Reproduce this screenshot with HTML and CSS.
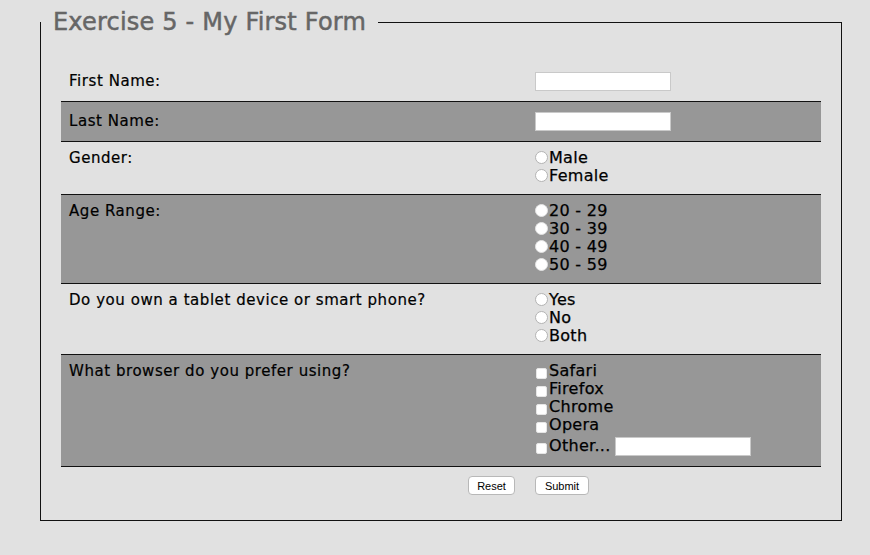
FILE: index.html
```html
<!DOCTYPE html>
<html lang="en">
<head>
<meta charset="utf-8">
<title>Exercise 5 - My First Form</title>
<link rel="stylesheet" href="styles.css">
</head>
<body>
<form class="page">
  <fieldset class="frame">
    <legend class="title">Exercise 5 - My First Form</legend>
    <table class="grid">
      <tr class="row input-row">
        <td class="label">First Name:</td>
        <td class="field"><input class="text" type="text"></td>
      </tr>
      <tr class="row alt input-row">
        <td class="label">Last Name:</td>
        <td class="field"><input class="text" type="text"></td>
      </tr>
      <tr class="row">
        <td class="label">Gender:</td>
        <td class="field">
          <label class="opt"><input class="radio" type="radio" name="g">Male</label>
          <label class="opt"><input class="radio" type="radio" name="g">Female</label>
        </td>
      </tr>
      <tr class="row alt">
        <td class="label">Age Range:</td>
        <td class="field">
          <label class="opt"><input class="radio" type="radio" name="a">20 - 29</label>
          <label class="opt"><input class="radio" type="radio" name="a">30 - 39</label>
          <label class="opt"><input class="radio" type="radio" name="a">40 - 49</label>
          <label class="opt"><input class="radio" type="radio" name="a">50 - 59</label>
        </td>
      </tr>
      <tr class="row">
        <td class="label">Do you own a tablet device or smart phone?</td>
        <td class="field">
          <label class="opt"><input class="radio" type="radio" name="t">Yes</label>
          <label class="opt"><input class="radio" type="radio" name="t">No</label>
          <label class="opt"><input class="radio" type="radio" name="t">Both</label>
        </td>
      </tr>
      <tr class="row alt last">
        <td class="label">What browser do you prefer using?</td>
        <td class="field">
          <label class="opt"><input class="check" type="checkbox">Safari</label>
          <label class="opt"><input class="check" type="checkbox">Firefox</label>
          <label class="opt"><input class="check" type="checkbox">Chrome</label>
          <label class="opt"><input class="check" type="checkbox">Opera</label>
          <label class="opt other"><input class="check" type="checkbox">Other... <input class="text" type="text"></label>
        </td>
      </tr>
      <tr class="actions">
        <td class="act-left"><button class="btn btn-reset" type="reset">Reset</button></td>
        <td class="act-right"><button class="btn btn-submit" type="submit">Submit</button></td>
      </tr>
    </table>
  </fieldset>
</form>
</body>
</html>
```

FILE: styles.css
```css
html, body {
  margin: 0;
  padding: 0;
  background: #e1e1e1;
}

body {
  font-family: "DejaVu Sans", "Open Sans", sans-serif;
  color: #000;
}

.page {
  padding: 7px 0 0 40px;
  margin: 0;
}

.frame {
  margin: 0;
  width: 760px;
  padding: 25px 20px 25px 20px;
  border: 1px solid #111;
}

.title {
  margin-left: -20px;
  padding: 0 12px;
  font-size: 24px;
  line-height: 30px;
  letter-spacing: 0.2px;
  font-weight: normal;
  color: #666;
  -webkit-text-stroke: 0.5px #666;
}

.grid {
  width: 760px;
  border-collapse: collapse;
  border-spacing: 0;
}

.row td {
  vertical-align: baseline;
  padding: 7px 8px 9px 8px;
  line-height: 18px;
}

.input-row td {
  padding-top: 8px;
  padding-bottom: 10px;
}

.row + .row td {
  border-top: 1px solid #111;
}

.last td {
  border-bottom: 1px solid #111;
}

.alt td {
  background: #979797;
}

.label {
  width: 450px;
  font-size: 15px;
  letter-spacing: 0.55px;
  -webkit-text-stroke: 0.2px #000;
}

.field {
  font-size: 16px;
  letter-spacing: 0.3px;
  -webkit-text-stroke: 0.25px #000;
}

.opt {
  display: block;
  line-height: 18px;
}

.other {
  line-height: 23px;
}

.text {
  box-sizing: border-box;
  width: 136px;
  height: 19px;
  margin: 0;
  padding: 0 3px;
  border: 1px solid #c9c9c9;
  background: #fff;
  vertical-align: baseline;
  font-size: 13px;
}

.field > .text {
  margin-top: 2px;
}

.other .text {
  margin-left: -1px;
}

.radio {
  appearance: none;
  -webkit-appearance: none;
  box-sizing: border-box;
  width: 13px;
  height: 13px;
  margin: 0 1px 0 0;
  border: 1px solid #b3b3b3;
  border-radius: 50%;
  background: #fff;
  vertical-align: -1px;
}

.alt .radio {
  border-color: #e4e4e4;
}

.check {
  appearance: none;
  -webkit-appearance: none;
  box-sizing: border-box;
  width: 11px;
  height: 11px;
  margin: 0 2px 0 1px;
  border: 1px solid #e6e6e6;
  border-radius: 2px;
  background: #fff;
  vertical-align: -3px;
}

.actions td {
  padding: 9px 8px 0 8px;
  line-height: 18px;
}

.act-left {
  text-align: right;
  padding-right: 12px !important;
}

.btn {
  box-sizing: border-box;
  height: 19px;
  margin: 0;
  padding: 0;
  border: 1px solid #b8b8b8;
  border-radius: 4px;
  background: #fff;
  font-family: "Liberation Sans", Arial, sans-serif;
  font-size: 11px;
  color: #000;
  vertical-align: top;
}

.btn-reset {
  width: 47px;
}

.btn-submit {
  width: 54px;
}
```
